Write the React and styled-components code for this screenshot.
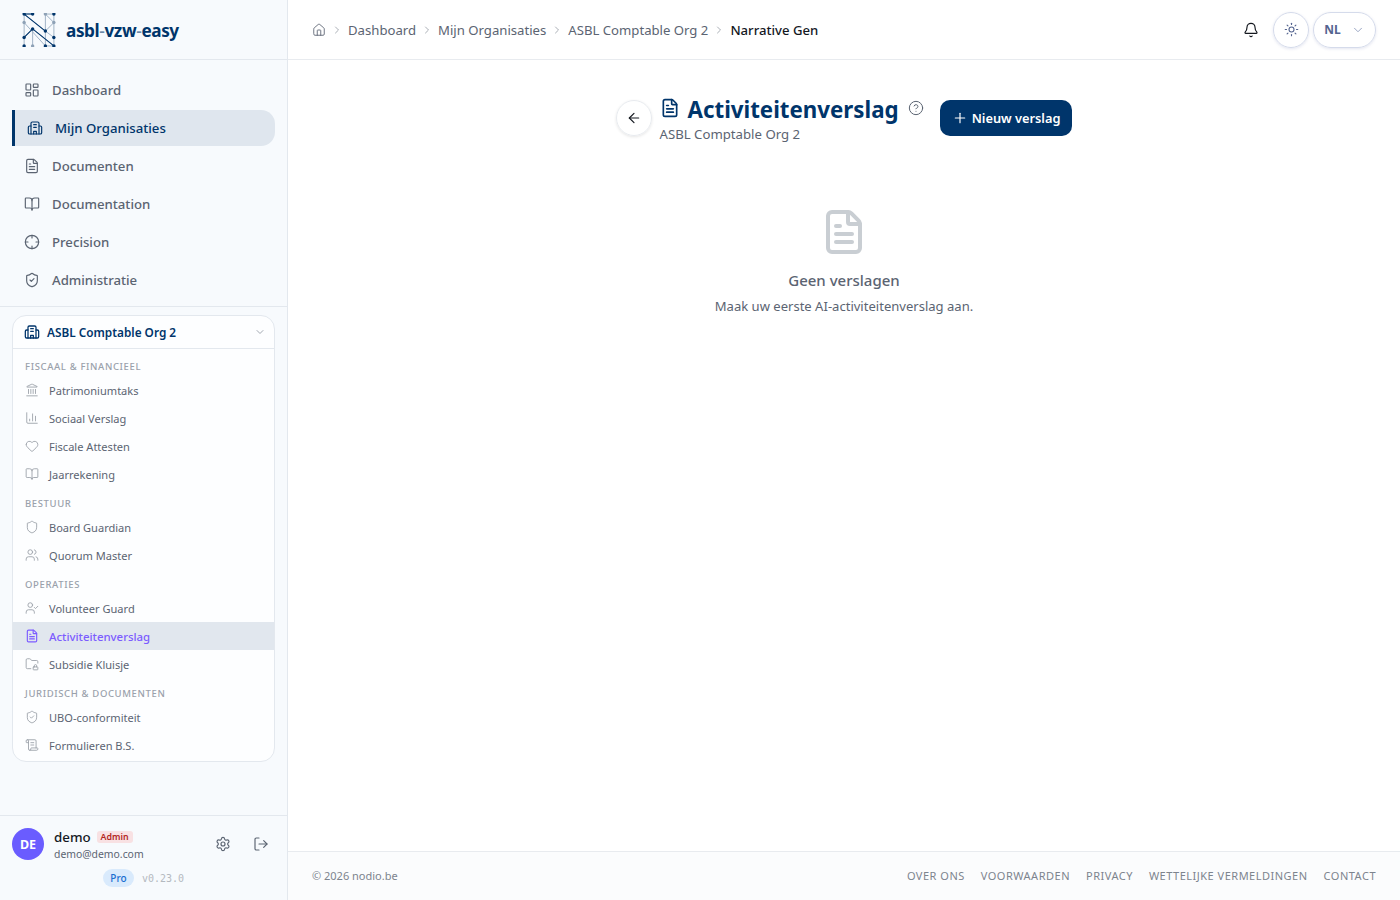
import React from 'react'
import styled, { createGlobalStyle } from 'styled-components'
import {
  ArrowLeft, Bell, BookOpen, ChartColumn, ChevronDown, ChevronRight, CircleHelp, Crosshair,
  FileText, FolderLock, Heart, House, Landmark, LayoutDashboard, LogOut, Plus, ScrollText,
  Settings, Shield, ShieldCheck, Sun, UserCheck, Users,
} from 'lucide-react'

const navy = '#00356b'

const GlobalStyle = createGlobalStyle`
  html, body { margin: 0; padding: 0; height: 100%; }
  body { font-family: "Noto Sans", "Liberation Sans", sans-serif; background: #fff; color: #1f2937; }
  * { box-sizing: border-box; }
`

const Shell = styled.div`
  display: grid;
  grid-template-columns: 288px 1fr;
  height: 100vh;
  overflow: hidden;
`

const Sidebar = styled.aside`
  display: flex;
  flex-direction: column;
  background: #f7fafd;
  border-right: 1px solid #e3e8ee;
  min-height: 0;
`

const Brand = styled.div`
  height: 60px;
  flex: none;
  display: flex;
  align-items: center;
  gap: 10px;
  padding: 0 22px;
  border-bottom: 1px solid #e3e8ee;
`

const BrandName = styled.div`
  font-size: 17.2px;
  font-weight: 700;
  letter-spacing: -0.4px;
  padding-top: 2px;
  color: ${navy};
  span { color: #6b8aa8; font-weight: 500; }
`

const MainNav = styled.nav`
  flex: none;
  display: flex;
  flex-direction: column;
  gap: 2px;
  padding: 12px 12px 8px;
  height: 247px;
  border-bottom: 1px solid #e3e8ee;
`

const NavItem = styled.a`
  height: 36px;
  display: flex;
  align-items: center;
  gap: 12px;
  font-size: 13.2px;
  font-weight: 500;
  padding-left: 12px;
  padding-bottom: 1px;
  color: ${p => (p.$active ? navy : '#5b6472')};
  background: ${p => (p.$active ? '#dfe6ee' : 'transparent')};
  border-left: ${p => (p.$active ? `3px solid ${navy}` : 'none')};
  border-radius: ${p => (p.$active ? '0 14px 14px 0' : '0')};
  svg { flex: none; }
`

const OrgCard = styled.section`
  margin: 8px 12px 0;
  flex: none;
  background: #fdfeff;
  border: 1px solid #e3e8ee;
  border-radius: 14px;
  overflow: hidden;
  padding-bottom: 2px;
`

const OrgHead = styled.div`
  height: 33px;
  display: flex;
  align-items: center;
  gap: 7px;
  padding: 0 8px 0 11px;
  border-bottom: 1px solid #e3e8ee;
  font-size: 11.8px;
  font-weight: 600;
  color: ${navy};
  span { flex: 1; }
`

const Groups = styled.div`
  padding-top: 2px;
`

const GroupLabel = styled.div`
  height: 25px;
  padding: 9px 12px 0;
  font-size: 9.5px;
  line-height: 14px;
  font-weight: 500;
  letter-spacing: 0.63px;
  text-transform: uppercase;
  color: #9aa1ab;
`

const SubItem = styled.a`
  height: 28px;
  display: flex;
  align-items: center;
  gap: 10px;
  padding: 0 12px;
  font-size: ${p => (p.$active ? '11.4px' : '11.05px')};
  font-weight: ${p => (p.$active ? 500 : 400)};
  color: ${p => (p.$active ? '#7c5cff' : '#5b6472')};
  background: ${p => (p.$active ? '#e1e7ee' : 'transparent')};
  svg { flex: none; color: ${p => (p.$active ? '#7c5cff' : '#9aa0a8')}; }
`

const UserPanel = styled.div`
  margin-top: auto;
  height: 85px;
  flex: none;
  border-top: 1px solid #e3e8ee;
  padding: 12px 12px 0;
  background-color: #f7fafd;
  background-image: radial-gradient(#e6ebf1 0.6px, transparent 0.6px);
  background-size: 4px 4px;
`

const UserRow = styled.div`
  display: flex;
  align-items: flex-start;
  gap: 10px;
`

const Avatar = styled.div`
  width: 32px;
  height: 32px;
  border-radius: 50%;
  background: #6a5cff;
  color: #fff;
  font-size: 12.5px;
  font-weight: 700;
  display: flex;
  align-items: center;
  justify-content: center;
`

const UserText = styled.div`
  flex: 1;
  min-width: 0;
`

const UserName = styled.div`
  display: flex;
  align-items: center;
  gap: 6px;
  font-size: 13.3px;
  line-height: 18px;
  font-weight: 500;
  color: #14181f;
`

const RoleBadge = styled.span`
  background: #f8e1e3;
  color: #b3261e;
  font-size: 8.8px;
  line-height: 12px;
  font-weight: 600;
  padding: 0 4px;
  border-radius: 3px;
`

const UserMail = styled.div`
  font-size: 10.4px;
  line-height: 16px;
  color: #5b6472;
`

const UserActions = styled.div`
  display: flex;
  align-items: center;
  gap: 22px;
  height: 32px;
  padding-right: 6px;
  color: #5b6472;
`

const PlanRow = styled.div`
  display: flex;
  align-items: center;
  justify-content: center;
  gap: 8px;
  margin-top: 7px;
`

const PlanBadge = styled.span`
  width: 31px;
  height: 18px;
  border-radius: 9px;
  background: #d9eafc;
  color: #1a6fd1;
  font-size: 10px;
  font-weight: 500;
  display: flex;
  align-items: center;
  justify-content: center;
`

const Version = styled.span`
  font-family: "DejaVu Sans Mono", "Liberation Mono", monospace;
  font-size: 10px;
  color: #b4b9c0;
`

const Main = styled.main`
  display: flex;
  flex-direction: column;
  min-width: 0;
`

const Topbar = styled.header`
  height: 60px;
  flex: none;
  display: flex;
  align-items: center;
  padding: 0 24px;
  border-bottom: 1px solid #e8ebef;
`

const Crumbs = styled.div`
  flex: 1;
  display: flex;
  align-items: center;
  gap: 5px;
  font-size: 13.15px;
  color: #5b6472;
  svg { color: #8d949e; flex: none; }
`

const CrumbHome = styled.span`
  display: flex;
  svg { color: #5b6472; }
`

const CrumbCurrent = styled.span`
  color: #14181f;
  font-weight: 500;
`

const TopActions = styled.div`
  display: flex;
  align-items: center;
  gap: 4px;
  color: #14181f;
`

const BellButton = styled.div`
  width: 36px;
  height: 36px;
  display: flex;
  align-items: center;
  justify-content: center;
`

const RoundButton = styled.div`
  height: 36px;
  width: ${p => (p.$wide ? '63px' : '36px')};
  border-radius: 18px;
  display: flex;
  align-items: center;
  justify-content: center;
  gap: 10px;
  border: 1px solid #d5dbeb;
  box-shadow: 0 1px 3px rgba(80, 96, 160, 0.16);
  color: #54648f;
  font-size: 12px;
  font-weight: 700;
`

const Content = styled.div`
  flex: 1;
  padding-top: 40px;
  display: flex;
  flex-direction: column;
  align-items: center;
`

const PageHead = styled.div`
  display: flex;
  align-items: center;
  gap: 8px;
  height: 36px;
`

const BackButton = styled.div`
  width: 36px;
  height: 36px;
  border-radius: 50%;
  border: 1px solid #e8ebef;
  box-shadow: 0 1px 3px rgba(0, 0, 0, 0.1);
  display: flex;
  align-items: center;
  justify-content: center;
  color: #14181f;
`

const TitleBlock = styled.div`
  display: flex;
  flex-direction: column;
  margin-top: 4px;
`

const TitleRow = styled.div`
  display: flex;
  align-items: center;
  gap: 8px;
  color: ${navy};
  height: 28px;
  h1 {
    margin: 0;
    font-size: 22.3px;
    line-height: 28px;
    font-weight: 700;
  }
  > svg { margin-top: -4px; }
`

const Help = styled.span`
  display: flex;
  color: #5b6472;
  margin: -4px 1px 0;
`

const Subtitle = styled.div`
  font-size: 13.2px;
  line-height: 20px;
  color: #5b6472;
`

const PrimaryButton = styled.button`
  height: 36px;
  border: 0;
  border-radius: 10px;
  padding: 0 12px;
  display: flex;
  align-items: center;
  gap: 4px;
  background: ${navy};
  color: #fff;
  font: 600 12.8px "Noto Sans", sans-serif;
  margin-left: 7px;
`

const Empty = styled.div`
  margin-top: 72px;
  display: flex;
  flex-direction: column;
  align-items: center;
  svg { color: #c9ced3; }
`

const EmptyTitle = styled.div`
  margin-top: 13px;
  font-size: 15px;
  line-height: 22px;
  font-weight: 500;
  color: #5b6472;
`

const EmptyText = styled.div`
  margin-top: 5px;
  font-size: 13.05px;
  line-height: 20px;
  color: #5b6472;
`

const Footer = styled.footer`
  height: 49px;
  flex: none;
  display: flex;
  align-items: center;
  justify-content: space-between;
  padding: 0 24px 2px;
  background: #fbfcfd;
  border-top: 1px solid #e8ebef;
  font-size: 11px;
  color: #7d848e;
`

const FooterLinks = styled.div`
  display: flex;
  gap: 16px;
  text-transform: uppercase;
  letter-spacing: 0.5px;
`

const Logo = () => {
  const dark = [[2, 1], [10, 1], [30, 1], [2, 23], [10, 15], [22, 17], [30, 23], [2, 31], [22, 31], [30, 31]]
  const light = [[22, 1], [2, 9], [30, 9], [10, 31]]
  return (
    <svg width="34" height="34" viewBox="0 0 32 32" fill="none">
      <path d="M2 1V31M2 1H10M2 1L22 17M2 9L22 31M22 1H30V31H22V1M22 1L30 9M30 9L22 17M2 23L10 15V31M10 15L30 31M30 23L22 17" stroke="#9db0c4" strokeWidth="0.9" />
      <path d="M2 1L22 17M2 23L10 15L30 31M2 1H10" stroke="#00356b" strokeWidth="1" />
      {dark.map(([x, y]) => <circle key={`${x}-${y}`} cx={x} cy={y} r="1.6" fill="#00356b" />)}
      {light.map(([x, y]) => <circle key={`${x}-${y}`} cx={x} cy={y} r="1.6" fill="#8ea1b6" />)}
    </svg>
  )
}

// central tower with two side wings, not in the icon packages
const OrgIcon = ({ size = 16, strokeWidth = 1.9 }) => (
  <svg width={size} height={size} viewBox="0 0 24 24" fill="none" stroke="currentColor" strokeWidth={strokeWidth} strokeLinecap="round" strokeLinejoin="round">
    <path d="M6 21V5a2 2 0 0 1 2-2h8a2 2 0 0 1 2 2v16" />
    <path d="M6 9H4a2 2 0 0 0-2 2v8a2 2 0 0 0 2 2h16a2 2 0 0 0 2-2v-8a2 2 0 0 0-2-2h-2" />
    <path d="M10 21v-4h4v4M10 7h4M10 11h4" />
  </svg>
)

const mainItems = [
  { label: 'Dashboard', icon: LayoutDashboard },
  { label: 'Mijn Organisaties', icon: OrgIcon, active: true },
  { label: 'Documenten', icon: FileText },
  { label: 'Documentation', icon: BookOpen },
  { label: 'Precision', icon: Crosshair },
  { label: 'Administratie', icon: ShieldCheck },
]

const groups = [
  {
    title: 'Fiscaal & Financieel',
    items: [
      { label: 'Patrimoniumtaks', icon: Landmark },
      { label: 'Sociaal Verslag', icon: ChartColumn },
      { label: 'Fiscale Attesten', icon: Heart },
      { label: 'Jaarrekening', icon: BookOpen },
    ],
  },
  {
    title: 'Bestuur',
    items: [
      { label: 'Board Guardian', icon: Shield },
      { label: 'Quorum Master', icon: Users },
    ],
  },
  {
    title: 'Operaties',
    items: [
      { label: 'Volunteer Guard', icon: UserCheck },
      { label: 'Activiteitenverslag', icon: FileText, active: true },
      { label: 'Subsidie Kluisje', icon: FolderLock },
    ],
  },
  {
    title: 'Juridisch & Documenten',
    items: [
      { label: 'UBO-conformiteit', icon: ShieldCheck },
      { label: 'Formulieren B.S.', icon: ScrollText },
    ],
  },
]

const crumbs = ['Dashboard', 'Mijn Organisaties', 'ASBL Comptable Org 2']
const footerLinks = ['Over ons', 'Voorwaarden', 'Privacy', 'Wettelijke vermeldingen', 'Contact']

const App = () => {
  return (
    <Shell>
      <GlobalStyle />
      <Sidebar>
        <Brand>
          <Logo />
          <BrandName>asbl<span>-</span>vzw<span>-</span>easy</BrandName>
        </Brand>
        <MainNav>
          {mainItems.map(({ label, icon: Icon, active }) => (
            <NavItem key={label} $active={active}>
              <Icon size={16} strokeWidth={1.75} />
              {label}
            </NavItem>
          ))}
        </MainNav>
        <OrgCard>
          <OrgHead>
            <OrgIcon size={16} />
            <span>ASBL Comptable Org 2</span>
            <ChevronDown size={12} color="#a3a9b2" />
          </OrgHead>
          <Groups>
            {groups.map(group => (
              <div key={group.title}>
                <GroupLabel>{group.title}</GroupLabel>
                {group.items.map(({ label, icon: Icon, active }) => (
                  <SubItem key={label} $active={active}>
                    <Icon size={14} strokeWidth={active ? 2 : 1.5} />
                    {label}
                  </SubItem>
                ))}
              </div>
            ))}
          </Groups>
        </OrgCard>
        <UserPanel>
          <UserRow>
            <Avatar>DE</Avatar>
            <UserText>
              <UserName>demo <RoleBadge>Admin</RoleBadge></UserName>
              <UserMail>demo@demo.com</UserMail>
            </UserText>
            <UserActions>
              <Settings size={16} strokeWidth={1.75} />
              <LogOut size={16} strokeWidth={1.75} />
            </UserActions>
          </UserRow>
          <PlanRow>
            <PlanBadge>Pro</PlanBadge>
            <Version>v0.23.0</Version>
          </PlanRow>
        </UserPanel>
      </Sidebar>
      <Main>
        <Topbar>
          <Crumbs>
            <CrumbHome><House size={14} strokeWidth={1.5} /></CrumbHome>
            {crumbs.map(c => (
              <React.Fragment key={c}>
                <ChevronRight size={12} strokeWidth={1.5} />
                <span>{c}</span>
              </React.Fragment>
            ))}
            <ChevronRight size={12} strokeWidth={1.5} />
            <CrumbCurrent>Narrative Gen</CrumbCurrent>
          </Crumbs>
          <TopActions>
            <BellButton><Bell size={16} strokeWidth={1.75} /></BellButton>
            <RoundButton><Sun size={15} strokeWidth={1.75} /></RoundButton>
            <RoundButton $wide>NL <ChevronDown size={14} strokeWidth={1.5} color="#8d99bb" /></RoundButton>
          </TopActions>
        </Topbar>
        <Content>
          <PageHead>
            <BackButton><ArrowLeft size={16} strokeWidth={1.75} /></BackButton>
            <TitleBlock>
              <TitleRow>
                <FileText size={20} strokeWidth={2} />
                <h1>Activiteitenverslag</h1>
                <Help><CircleHelp size={16} strokeWidth={1.5} /></Help>
              </TitleRow>
              <Subtitle>ASBL Comptable Org 2</Subtitle>
            </TitleBlock>
            <PrimaryButton><Plus size={16} strokeWidth={1.75} /> Nieuw verslag</PrimaryButton>
          </PageHead>
          <Empty>
            <FileText size={48} strokeWidth={2} />
            <EmptyTitle>Geen verslagen</EmptyTitle>
            <EmptyText>Maak uw eerste AI-activiteitenverslag aan.</EmptyText>
          </Empty>
        </Content>
        <Footer>
          <span>© 2026 nodio.be</span>
          <FooterLinks>
            {footerLinks.map(l => <span key={l}>{l}</span>)}
          </FooterLinks>
        </Footer>
      </Main>
    </Shell>
  )
}

export default App
